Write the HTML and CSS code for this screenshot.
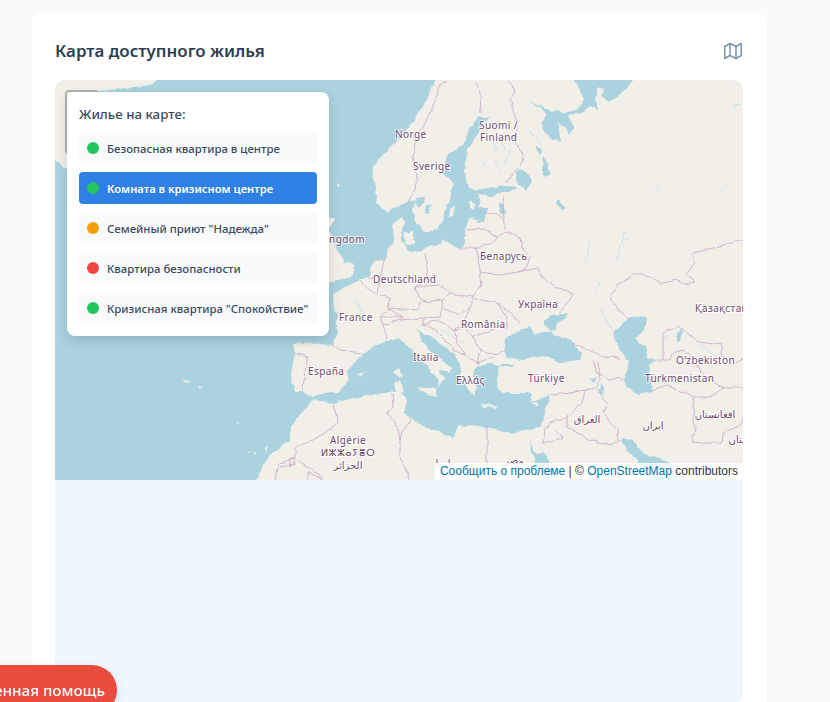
FILE: index.html
```html
<!DOCTYPE html>
<html lang="ru">
<head>
  <meta charset="UTF-8" />
  <meta name="viewport" content="width=device-width, initial-scale=1" />
  <title>Карта доступного жилья</title>
  <link rel="stylesheet" href="styles.css">
</head>
<body>

<main class="card">
  <div class="card-head">
    <h2>Карта доступного жилья</h2>
    <svg class="head-icon" viewBox="0 0 24 24" fill="none" stroke="currentColor" stroke-width="2" stroke-linejoin="round" stroke-linecap="round">
      <path d="M1 6v16l7-4 8 4 7-4V2l-7 4-8-4-7 4z" />
      <path d="M8 2v16" />
      <path d="M16 6v16" />
    </svg>
  </div>

  <div class="map-wrap">
    <div class="map">
      <svg class="tiles" viewBox="55 80 688 400">
        <defs>
          <filter id="coast" x="40" y="65" width="720" height="430" filterUnits="userSpaceOnUse">
            <feTurbulence type="fractalNoise" baseFrequency="0.09" numOctaves="3" seed="4" />
            <feDisplacementMap in="SourceGraphic" scale="6" xChannelSelector="R" yChannelSelector="G" />
          </filter>
          <filter id="wiggle" x="40" y="65" width="720" height="430" filterUnits="userSpaceOnUse">
            <feTurbulence type="fractalNoise" baseFrequency="0.12" numOctaves="2" seed="9" />
            <feDisplacementMap in="SourceGraphic" scale="4" xChannelSelector="R" yChannelSelector="G" />
          </filter>
        </defs>

        <rect class="sea" x="55" y="80" width="688" height="400" />

        <g class="coast">
          <!-- land -->
          <path class="land" d="M45,70 L175,70 150,85 110,90 72,95 70,170 60,165 45,150 Z" />
          <path class="land" d="M438,70 L760,70 760,495 250,495 263,463 273,453 290,440 290,427 300,415 308,407 313,398 303,392 295,392 292,377 295,353 293,345 302,343 333,345 338,332 333,293 360,280 367,278 377,260 385,257 393,243 392,227 400,217 405,222 418,200 408,202 398,207 387,212 377,203 375,190 373,167 383,155 395,143 410,127 420,110 430,93 Z" />
          <path class="land" d="M320,213 L335,219 330,232 337,250 345,262 355,265 353,275 343,280 320,284 Z" />

          <!-- seas -->
          <path class="sea" d="M567,70 L640,70 627,87 617,97 608,102 601,95 605,89 597,87 597,100 597,111 590,107 580,112 568,115 573,128 570,133 557,123 561,141 550,138 543,130 542,120 547,114 530,100 543,108 563,113 577,110 582,100 580,88 Z" />
          <path class="sea" d="M388,214 L398,207 408,202 413,213 418,224 424,232 432,232 440,226 445,213 451,193 453,183 444,173 448,155 463,145 467,133 477,117 490,118 483,123 477,137 467,150 465,173 468,187 477,190 493,187 507,185 517,188 505,193 487,197 477,193 480,203 478,208 488,208 483,222 478,222 470,217 465,230 465,243 457,248 443,241 428,248 423,250 408,252 402,240 402,233 405,222 400,217 Z" />
          <path class="sea" d="M310,398 L325,394 337,393 350,380 347,370 362,356 372,347 385,342 398,338 405,342 417,357 430,370 440,381 437,389 445,378 438,370 450,373 453,367 437,357 423,343 416,328 421,332 440,343 457,357 460,370 460,377 467,387 473,397 477,388 472,372 478,366 490,362 500,366 497,387 503,393 533,393 530,403 550,395 543,420 540,427 510,433 487,428 460,425 453,437 433,430 412,420 403,413 408,400 400,392 393,392 383,392 367,395 333,403 315,400 Z" />
          <path class="sea" d="M500,364 L513,364 513,367 500,367 Z" />
          <path class="sea" d="M503,347 L506,338 514,333 524,328 530,327 535,335 550,330 553,336 570,340 582,352 580,360 560,362 540,355 522,360 507,358 Z" />
          <path class="sea" d="M543,322 L552,315 568,313 564,320 557,325 555,330 548,328 Z" />
          <path class="sea" d="M613,333 L622,325 630,317 647,318 645,330 635,337 645,347 647,357 657,360 648,365 650,375 652,390 640,395 627,388 623,380 627,368 627,360 617,347 Z" />
          <path class="sea" d="M620,440 L630,438 643,453 663,460 672,464 680,485 650,485 640,465 Z" />
          <path class="sea" d="M529,441 L537,453 544,452 540,445 549,462 558,485 544,485 535,460 Z" />

          <!-- lakes and islands -->
          <g class="sea">
            <path d="M516,172 L524,170 532,180 526,190 518,184 Z" />
            <path d="M541,156 L546,160 552,175 546,178 543,168 Z" />
            <path d="M497,203 L503,204 507,212 500,213 Z" />
            <path d="M416,197 L425,196 424,204 418,208 Z" />
            <path d="M427,205 L431,204 430,213 426,214 Z" />
            <path d="M558,200 L566,207 562,211 556,205 Z" />
            <path d="M677,335 L680,327 682,330 680,341 677,342 Z" />
            <path d="M589,380 L596,377 593,383 Z" />
            <path d="M601,384 L604,387 603,396 600,392 Z" />
            <path d="M536,146 L541,150 540,155 536,152 Z" />
          </g>
          <g class="land">
            <path d="M450,210 L455,206 453,216 449,218 Z" />
            <path d="M469,201 L477,204 474,210 470,208 Z" />
            <path d="M404,232 L413,232 415,243 406,246 Z" />
            <path d="M394,373 L399,369 402,375 399,378 Z" />
            <path d="M395,385 L401,381 404,392 398,395 Z" />
            <path d="M417,388 L430,388 437,387 436,397 Z" />
            <path d="M479,404 L495,405 499,408 484,407 Z" />
            <path d="M530,404 L538,402 537,407 Z" />
            <path d="M356,373 L366,371 360,377 Z" />
          </g>
        </g>

        <!-- small islands far from the coast stay sharp -->
        <g class="land">
          <path d="M336,380 L340,380 339,383 Z" />
          <path d="M337,187 L338,183 340,186 Z" />
          <path d="M236,422 L239,422 238,424 Z" />
          <path d="M248,451 L250,451 249,454 Z" />
          <path d="M253,452 L256,452 255,455 Z" />
          <path d="M265,448 L268,446 266,452 Z" />
          <path d="M182,380 L191,381 186,383 Z" />
          <path d="M198,386 L203,387 200,389 Z" />
        </g>

        <!-- rivers -->
        <path class="rivers" d="M625,232 L622,240 632,237 M622,240 L624,248 M596,290 L600,282 M616,260 L620,245 M655,190 L660,182 M740,103 L733,108 M720,190 L727,186 M500,140 L505,150 M487,130 L497,150 M510,150 L505,165 M530,130 L540,145 M480,160 L490,170 M495,160 L500,172 M590,240 L586,262 M618,340 L600,310 M442,330 L465,345 M355,300 L365,320 M700,345 L720,360 M660,340 L668,335" />

        <!-- borders -->
        <path class="borders" d="M447,80 L440,85 435,103 423,127 415,143 413,157 417,177 415,190 408,202 M475,80 L480,93 481,113 M508,80 L515,90 510,100 517,123 515,142 524,155 520,167 505,183 M505,197 L502,207 503,217 505,230 M484,212 L493,213 502,217 M465,230 L485,229 497,237 507,232 M497,237 L493,243 475,248 458,248 M507,232 L520,237 522,248 530,257 525,270 518,272 500,275 480,272 478,257 475,248 M480,272 L482,285 473,297 M518,272 L538,268 542,277 557,287 573,293 570,300 558,313 M745,239 L717,247 693,253 695,263 687,273 695,282 683,284 677,280 662,283 643,274 632,274 622,283 617,285 612,297 610,300 622,313 630,320 M663,360 L663,332 680,327 698,342 722,345 722,355 733,365 745,357 M657,360 L670,360 672,353 683,350 695,360 702,373 715,383 723,388 M652,390 L667,385 677,390 693,397 693,410 695,430 692,442 705,443 722,443 723,433 740,425 745,417 M693,397 L710,397 723,388 745,388 M573,343 L593,352 607,357 620,358 M593,360 L597,373 610,380 620,377 623,382 M597,360 L600,373 597,388 585,390 570,393 550,395 M597,388 L608,405 603,413 617,430 618,440 M585,390 L582,403 567,417 550,423 545,430 543,443 M567,417 L567,427 590,440 610,445 620,440 M555,430 L563,438 543,443 M487,428 L487,482 M392,393 L393,407 388,413 398,428 400,440 400,457 412,482 M411,420 L402,432 400,440 M333,405 L338,422 333,428 313,440 295,448 295,458 290,458 290,467 M295,458 L323,478 M277,465 L295,457 295,465 277,467 275,482 M308,472 L328,482 M308,472 L308,482 M293,353 L308,357 305,370 303,390 M333,345 L340,350 362,353 M360,280 L365,287 378,295 390,298 387,310 380,317 383,325 387,338 M368,278 L380,277 385,258 M380,277 L378,295 M425,253 L428,277 415,287 418,297 427,302 M390,298 L388,308 418,310 420,302 M388,308 L403,317 380,317 M403,317 L400,320 383,325 M400,320 L423,318 423,325 M415,287 L440,285 450,293 473,297 M420,302 L442,300 450,293 M442,300 L442,308 440,317 423,318 M442,308 L460,315 472,307 472,298 M472,307 L462,323 455,330 437,320 M472,298 L497,303 507,317 507,328 497,328 473,337 465,328 455,330 M497,303 L510,312 520,323 M435,330 L455,350 467,355 477,363 493,357 M473,337 L480,350 497,355 507,348 M455,330 L457,345 467,355 M480,350 L477,363 M423,325 L437,320 M435,330 L423,325" />

        <!-- labels -->
        <g class="labels">
          <text x="395" y="138">Norge</text>
          <text x="413" y="170">Sverige</text>
          <text x="479" y="129">Suomi /</text>
          <text x="480" y="141">Finland</text>
          <text x="480" y="260">Беларусь</text>
          <text x="365" y="243" text-anchor="end">United Kingdom</text>
          <text x="373" y="283">Deutschland</text>
          <text x="339" y="321">France</text>
          <text x="518" y="308">Україна</text>
          <text x="461" y="328">România</text>
          <text x="695" y="312">Қазақстан</text>
          <text x="676" y="364">O‘zbekiston</text>
          <text x="413" y="361">Italia</text>
          <text x="456" y="384">Ελλάς</text>
          <text x="528" y="382">Türkiye</text>
          <text x="645" y="382">Türkmenistan</text>
          <text x="308" y="375">España</text>
          <text x="348" y="444" text-anchor="middle">Algérie</text>
          <text x="348" y="456" text-anchor="middle">ⵍⵣⵣⴰⵢⴻⵔ</text>
          <text x="348" y="469" text-anchor="middle">الجزائر</text>
          <text x="587" y="423" text-anchor="middle">العراق</text>
          <text x="653" y="429" text-anchor="middle">ايران</text>
          <text x="715" y="418" text-anchor="middle">افغانستان</text>
          <text x="745" y="443" text-anchor="middle">پاکستان</text>
          <text x="514" y="464" text-anchor="middle">مصر</text>
          <text x="443" y="467" text-anchor="middle">ليبيا</text>
          <text x="597" y="482" text-anchor="middle">السعودية</text>
        </g>
      </svg>

      <div class="zoom-control"></div>

      <div class="legend">
        <h4>Жилье на карте:</h4>
        <div class="legend-item"><span class="dot green"></span>Безопасная квартира в центре</div>
        <div class="legend-item active"><span class="dot green"></span>Комната в кризисном центре</div>
        <div class="legend-item"><span class="dot orange"></span>Семейный приют "Надежда"</div>
        <div class="legend-item"><span class="dot red"></span>Квартира безопасности</div>
        <div class="legend-item"><span class="dot green"></span>Кризисная квартира "Спокойствие"</div>
      </div>

      <div class="attribution"><a href="#">Сообщить о проблеме</a> | © <a href="#">OpenStreetMap</a> contributors</div>
    </div>
  </div>
</main>

<a class="help-btn" href="#">Экстренная помощь</a>

</body>
</html>
```

FILE: styles.css
```css
html {
  height: 100%;
  overflow: hidden;
}

body {
  margin: 0;
  height: 100%;
  overflow: hidden;
  background-color: #f8fafc;
  color: #2c3e50;
  font-family: "Noto Sans", "Open Sans", sans-serif;
}

/* Main card */
.card {
  width: 736px;
  margin: 12px 0 0 31px;
  padding: 24px;
  box-sizing: border-box;
  background: #fff;
  border-radius: 10px;
  box-shadow: 0 1px 3px rgba(0,0,0,0.05);
}

.card-head {
  display: flex;
  justify-content: space-between;
  align-items: center;
  height: 29px;
  margin-bottom: 15px;
}

.card-head h2 {
  margin: 0;
  font-size: 16.9px;
  font-weight: 600;
  color: #2c3e50;
}

.head-icon {
  width: 18px;
  height: 18px;
  margin-right: 1px;
  color: #7b93af;
}

/* Map block */
.map-wrap {
  height: 624px;
  background: #eff6ff;
  border-radius: 12px;
  overflow: hidden;
}

.map {
  position: relative;
  height: 400px;
  overflow: hidden;
}

.tiles {
  display: block;
  width: 688px;
  height: 400px;
}

.tiles .sea,
.tiles .sea path {
  fill: #aad3df;
}

.tiles .land,
.tiles .land path {
  fill: #f2efe9;
}

.coast {
  filter: url(#coast);
}

.rivers {
  fill: none;
  stroke: #c4e0e8;
  stroke-width: 0.8;
  filter: url(#wiggle);
}

.borders {
  fill: none;
  stroke: #c9afc8;
  stroke-width: 0.9;
  stroke-linejoin: round;
  filter: url(#wiggle);
}

.labels text {
  font-family: "Noto Sans", "DejaVu Sans", sans-serif;
  font-size: 10px;
  letter-spacing: 0.4px;
  fill: #6f4a70;
  stroke: rgba(255,255,255,0.75);
  stroke-width: 2px;
  paint-order: stroke;
}

.zoom-control {
  position: absolute;
  top: 10px;
  left: 10px;
  width: 30px;
  height: 60px;
  background: #fff;
  border: 2px solid rgba(0,0,0,0.3);
  border-radius: 4px;
}

/* Housing list over the map */
.legend {
  position: absolute;
  top: 12px;
  left: 12px;
  width: 262px;
  padding: 12px;
  box-sizing: border-box;
  background: #fff;
  border-radius: 8px;
  box-shadow: 0 4px 12px rgba(0,0,0,0.15);
}

.legend h4 {
  margin: 0 0 8px;
  font-size: 13.3px;
  line-height: 20px;
  font-weight: 500;
  color: #3d4a5c;
}

.legend-item {
  display: flex;
  align-items: center;
  gap: 8px;
  height: 32px;
  margin-bottom: 8px;
  padding: 0 8px;
  background: #f8fafc;
  border-radius: 4px;
  font-size: 11.4px;
  font-weight: 500;
  color: #3d4a5c;
  white-space: nowrap;
}

.legend-item:last-child {
  margin-bottom: 0;
}

.legend-item.active {
  background: #2f80e5;
  color: #fff;
  font-size: 11.2px;
  font-weight: 600;
}

.dot {
  flex: none;
  width: 12px;
  height: 12px;
  border-radius: 50%;
}

.dot.green { background: #22c55e; }
.dot.orange { background: #f59e0b; }
.dot.red { background: #ef4444; }

.attribution {
  position: absolute;
  right: 0;
  bottom: 0;
  padding: 0 5px;
  height: 17px;
  line-height: 17px;
  background: rgba(255,255,255,0.85);
  font-family: "Liberation Sans", Arial, sans-serif;
  font-size: 12px;
  color: #333;
  white-space: nowrap;
}

.attribution a {
  color: #0078a8;
  text-decoration: none;
}

/* Emergency button, cut by the window edge */
.help-btn {
  position: fixed;
  right: 713px;
  bottom: -13px;
  height: 50px;
  line-height: 50px;
  padding: 0 12px 0 20px;
  background: #e74c3c;
  border-radius: 25px;
  box-shadow: 0 4px 12px rgba(0,0,0,0.1);
  color: #fff;
  font-size: 15.2px;
  font-weight: 500;
  text-decoration: none;
  white-space: nowrap;
}
```
